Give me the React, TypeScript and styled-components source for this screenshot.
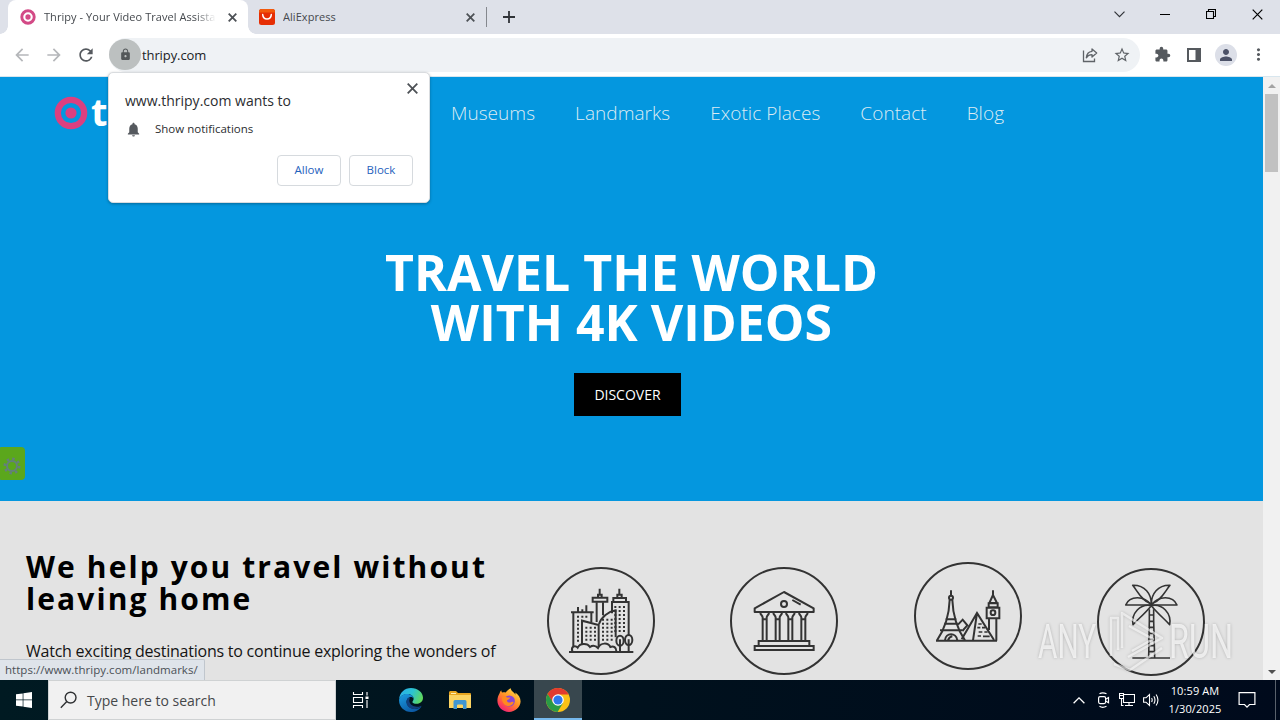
import React, { FC, ReactNode } from 'react';
import styled, { createGlobalStyle, css } from 'styled-components';
import {
  MdArrowBack,
  MdArrowForward,
  MdExtension,
  MdLock,
  MdMoreVert,
  MdNotifications,
  MdPerson,
  MdRefresh,
  MdStarBorder
} from 'react-icons/md';

const GlobalStyle = createGlobalStyle`
  * {
    box-sizing: border-box;
  }

  body {
    margin: 0;
    overflow: hidden;
    font-family: 'Open Sans', 'Noto Sans', sans-serif;
  }

  svg {
    display: block;
    flex: none;
  }
`;

const Desktop = styled.div`
  position: relative;
  display: flex;
  flex-direction: column;
  width: 1280px;
  height: 720px;
  overflow: hidden;
  background: #ffffff;
`;

/* ---------- Browser chrome ---------- */

const TabStrip = styled.div`
  display: flex;
  height: 34px;
  padding-left: 8px;
  background: #dee1e9;
`;

const Tab = styled.div<{ $active?: boolean }>`
  position: relative;
  display: flex;
  align-items: center;
  height: 34px;
  width: ${({ $active }) => ($active ? 240 : 238)}px;
  padding: 0 11px 0 ${({ $active }) => ($active ? 12 : 11)}px;
  font-size: 11px;
  letter-spacing: 0.05px;
  color: #45494e;

  ${({ $active }) =>
    $active &&
    css`
      background: #ffffff;
      border-radius: 8px 8px 0 0;

      &::before,
      &::after {
        content: '';
        position: absolute;
        bottom: 0;
        width: 8px;
        height: 8px;
      }

      &::before {
        left: -8px;
        background: radial-gradient(circle at 0 0, transparent 7.5px, #ffffff 8px);
      }

      &::after {
        right: -8px;
        background: radial-gradient(circle at 100% 0, transparent 7.5px, #ffffff 8px);
      }
    `}
`;

const TabTitle = styled.span<{ $fade?: boolean }>`
  flex: 1;
  margin: 0 12px 0 8px;
  line-height: 16px;
  white-space: nowrap;
  overflow: hidden;
  ${({ $fade }) => $fade && 'mask-image: linear-gradient(90deg, #000 88%, transparent);'}
`;

const TabDivider = styled.div`
  width: 1px;
  height: 20px;
  margin: 7px 16px 0 0;
  background: #85888e;
`;

const NewTab = styled.div`
  display: flex;
  align-items: center;
`;

const WindowButtons = styled.div`
  display: flex;
  height: 28px;
  margin-left: auto;
`;

const WindowButton = styled.div`
  display: flex;
  align-items: center;
  justify-content: center;
  width: 46px;
`;

const Toolbar = styled.div`
  display: flex;
  align-items: center;
  height: 43px;
  padding: 0 0 1px 12px;
  color: #55595e;
  background: #ffffff;
  border-bottom: 1px solid #d8e6ee;
`;

const NavButtons = styled.div`
  display: flex;
  gap: 12px;
  width: 97px;
`;

const DimIcon = styled.span`
  color: #b5b7ba;
`;

const AddressBar = styled.div`
  display: flex;
  align-items: center;
  width: 1031px;
  height: 34px;
  padding-right: 9px;
  font-size: 13px;
  letter-spacing: -0.1px;
  color: #202226;
  background: #eff2f5;
  border-radius: 17px;
`;

const LockBadge = styled.div`
  display: flex;
  align-items: center;
  justify-content: center;
  width: 32px;
  height: 31px;
  margin: 0 1px 0 0;
  padding-left: 1px;
  color: #54585a;
  background: #bcc0c0;
  border-radius: 50%;
`;

const Url = styled.span`
  flex: 1;
`;

const AddressActions = styled.div`
  display: flex;
  align-items: center;
  gap: 15px;
  color: #5f6368;
`;

const ToolbarActions = styled.div`
  display: flex;
  align-items: center;
  margin-left: 6px;
`;

const ToolbarSlot = styled.div`
  display: flex;
  align-items: center;
  justify-content: center;
  width: 32px;
  height: 24px;
`;

const Avatar = styled.div`
  display: flex;
  align-items: center;
  justify-content: center;
  width: 22px;
  height: 22px;
  color: #4c5268;
  background: #dcdfe8;
  border-radius: 50%;
`;

/* ---------- Notification prompt ---------- */

const Prompt = styled.div`
  position: absolute;
  top: 72px;
  left: 108px;
  width: 322px;
  height: 131px;
  padding: 18px 17px 17px;
  background: #ffffff;
  border: 1px solid #d9dcdf;
  border-radius: 5px;
  box-shadow: 0 1px 3px rgba(0, 0, 0, 0.3);
`;

const PromptClose = styled.div`
  position: absolute;
  top: 10px;
  right: 11px;
`;

const PromptTitle = styled.div`
  margin-left: -1px;
  font-size: 14px;
  line-height: 20px;
  color: #2b2d30;
`;

const PromptRow = styled.div`
  display: flex;
  align-items: center;
  gap: 13px;
  margin: 8px 0 0 -1px;
  font-size: 11.5px;
  line-height: 20px;
  color: #2b2d30;
`;

const PromptActions = styled.div`
  display: flex;
  justify-content: flex-end;
  gap: 8px;
  margin: 16px -1px 0 0;
`;

const PromptButton = styled.button`
  width: 64px;
  height: 31px;
  padding: 0 0 2px;
  font: 500 11.5px 'Open Sans', sans-serif;
  color: #1f62bd;
  background: #ffffff;
  border: 1px solid #d6dade;
  border-radius: 4px;
`;

/* ---------- Page ---------- */

const Viewport = styled.div`
  display: flex;
  height: 603px;
`;

const Page = styled.main`
  display: flex;
  flex-direction: column;
  width: 1263px;
  overflow: hidden;
  background: #e3e3e3;
`;

const Hero = styled.section`
  display: flex;
  flex: none;
  flex-direction: column;
  align-items: center;
  height: 424px;
  background: #0497df;
`;

const SiteHeader = styled.header`
  display: flex;
  align-items: center;
  width: 100%;
  height: 72px;
  padding-left: 54px;
`;

const Brand = styled.div`
  display: flex;
  align-items: center;
  gap: 3px;
  width: 397px;
  font-size: 38px;
  font-weight: 700;
  letter-spacing: -2px;
  line-height: 40px;
  color: #ffffff;
`;

const BrandName = styled.span`
  margin-top: -5px;
`;

const SiteNav = styled.nav`
  display: flex;
  gap: 40px;
`;

const SiteLink = styled.a`
  font-size: 19px;
  font-weight: 300;
  line-height: 30px;
  letter-spacing: 0.05px;
  color: #dcebf3;
`;

const HeroTitle = styled.h1`
  margin: 98px 0 26px;
  font-size: 50px;
  font-weight: 700;
  line-height: 50px;
  text-align: center;
  color: #ffffff;
`;

const DiscoverButton = styled.button`
  width: 107px;
  height: 43px;
  margin-right: 8px;
  padding: 0;
  font: 400 14px 'Open Sans', sans-serif;
  color: #ffffff;
  background: #000000;
  border: 0;
`;

const Intro = styled.section`
  display: flex;
  align-items: flex-start;
  padding: 50px 0 0 26px;
`;

const IntroText = styled.div`
  width: 521px;
`;

const IntroTitle = styled.h2`
  margin: 0 0 24px;
  font-size: 30px;
  font-weight: 700;
  line-height: 32px;
  letter-spacing: 2.1px;
  color: #000000;
`;

const IntroBody = styled.p`
  margin: 0;
  font-size: 16px;
  line-height: 24px;
  letter-spacing: -0.23px;
  white-space: nowrap;
  color: #141414;
`;

const Categories = styled.div`
  display: flex;
  gap: 75.300px;
`;

const Category = styled.svg<{ $top: number }>`
  width: 108px;
  height: 108px;
  margin-top: ${({ $top }) => $top}px;
  fill: none;
  stroke: #333333;
  stroke-width: 6;
`;

const Scrollbar = styled.div`
  display: flex;
  flex-direction: column;
  justify-content: space-between;
  width: 17px;
  padding: 7px 2px 6px;
  background: #f1f1f1;
`;

const ScrollTrack = styled.div`
  flex: 1;
  padding-top: 6px;
`;

const ScrollThumb = styled.div`
  height: 78px;
  background: #c1c1c1;
`;

const ScrollArrow = styled.div<{ $down?: boolean }>`
  width: 0;
  margin: 0 auto;
  border: 4px solid transparent;
  ${({ $down }) =>
    $down ? 'border-top-color: #505050; border-bottom: 0;' : 'border-bottom-color: #a3a3a3; border-top: 0;'}
`;

const SettingsHandle = styled.div`
  position: absolute;
  top: 447px;
  left: 0;
  display: flex;
  align-items: center;
  width: 25px;
  height: 33px;
  padding: 5px 0 0 3px;
  background: #5ba71c;
  border-radius: 1px 4px 4px 1px;
`;

const StatusBubble = styled.div`
  position: absolute;
  top: 659px;
  left: 0;
  width: 205px;
  height: 21px;
  padding-left: 5px;
  font-size: 11.5px;
  line-height: 20px;
  letter-spacing: 0.03px;
  color: #4b5056;
  background: #dfe4ea;
  border: solid #c0c6cd;
  border-width: 1px 1px 0 0;
  border-radius: 0 2px 0 0;
`;

const Watermark = styled.svg`
  position: absolute;
  top: 604px;
  left: 1032px;
  overflow: visible;
  filter: drop-shadow(0 0 1.5px rgba(0, 0, 0, 0.3));
`;

/* ---------- Taskbar ---------- */

const Taskbar = styled.div`
  display: flex;
  height: 40px;
  background: linear-gradient(90deg, #001a22, #00111d 50%, #000a1c);
`;

const TaskButton = styled.div<{ $active?: boolean; $gap?: number }>`
  display: flex;
  align-items: center;
  justify-content: center;
  width: 48px;
  height: 40px;
  margin-left: ${({ $gap = 0 }) => $gap}px;
  ${({ $active }) =>
    $active &&
    css`
      background: #38474e;
      box-shadow: inset 0 -2px #76b9ed;
    `}
`;

const SearchBox = styled.div`
  display: flex;
  align-items: center;
  gap: 10px;
  width: 288px;
  padding-left: 11px;
  font-size: 14px;
  color: #45484a;
  background: #f1f1f1;
  border: 1px solid #cfd2d3;
`;

const Tray = styled.div`
  display: flex;
  align-items: center;
  margin-left: auto;
`;

const TraySlot = styled.div<{ $width?: number }>`
  display: flex;
  align-items: center;
  justify-content: center;
  width: ${({ $width = 24 }) => $width}px;
`;

const Clock = styled.div`
  width: 64px;
  font-size: 11px;
  line-height: 18px;
  letter-spacing: 0.1px;
  text-align: center;
  color: #ffffff;
`;

const ShowDesktop = styled.div`
  width: 5px;
  height: 40px;
  margin-left: 8px;
  border-left: 1px solid #59616c;
`;

/* ---------- Icons ---------- */

interface CrossProps {
  size: number;
  color?: string;
  width?: number;
}

const Cross: FC<CrossProps> = ({ size, color = '#4d5156', width = 1.8 }) => (
  <svg width={size} height={size} viewBox={`0 0 ${size} ${size}`} stroke={color} strokeWidth={width}>
    <path d={`M.7 .7L${size - 0.7} ${size - 0.7}M${size - 0.7} .7L.7 ${size - 0.7}`} />
  </svg>
);

const Target: FC<{ size: number; color: string }> = ({ size, color }) => (
  <svg width={size} height={size} viewBox="0 0 34 34">
    <circle cx="17" cy="17" r="13.2" fill="none" stroke={color} strokeWidth="6.2" />
    <circle cx="17" cy="17" r="5.6" fill={color} />
  </svg>
);

const AliIcon = () => (
  <svg width="16" height="16" viewBox="0 0 16 16">
    <rect width="16" height="16" rx="2.5" fill="#e62e04" />
    <path d="M0 3.5V2.5A2.5 2.5 0 0 1 2.5 0h11A2.5 2.5 0 0 1 16 2.5v1z" fill="#f25a0c" />
    <path d="M3.7 5.6c.5 5.8 8.1 5.8 8.6 0" fill="none" stroke="#fff" strokeWidth="1.5" strokeLinecap="round" />
  </svg>
);

const ShareIcon = () => (
  <svg width="16" height="16" viewBox="0 0 16 16" fill="none" stroke="#5f6368" strokeWidth="1.3">
    <path d="M1.5 3.5v11h11v-3" />
    <path d="M10 2l4.7 4L10 10V7.7C7.3 7.7 5.6 8.6 4.3 10.8 4.6 7.3 6.6 4.7 10 4.3z" strokeLinejoin="round" />
  </svg>
);

const SidePanelIcon = () => (
  <svg width="14" height="14" viewBox="0 0 14 14">
    <path d="M0 0h14v14H0zM2 2v10h6.5V2z" fill="#55595e" fillRule="evenodd" />
  </svg>
);

const GearIcon = () => (
  <svg width="18" height="18" viewBox="0 0 18 18" fill="none" stroke="#64807c">
    <circle cx="9" cy="9" r="5" strokeWidth="2" />
    <circle cx="9" cy="9" r="7.2" strokeWidth="2.6" strokeDasharray="2.4 3.255" />
  </svg>
);

// Columns of small square windows, drawn as dashed vertical lines
const Windows: FC<{ xs: number[]; top: number; bottom: number }> = ({ xs, top, bottom }) => (
  <path d={xs.map(x => `M${x} ${top}V${bottom}`).join('')} strokeWidth="6" strokeDasharray="6 6" />
);

interface CategoryIconProps {
  origin: [number, number];
  top: number;
  children: ReactNode;
}

const CategoryIcon: FC<CategoryIconProps> = ({ origin: [x, y], top, children }) => (
  <Category $top={top} viewBox={`${x} ${y} 324 324`}>
    <circle cx={x + 162} cy={y + 162} r="159" />
    {children}
  </Category>
);

const CityIcon = () => (
  <CategoryIcon origin={[51, 51]} top={16}>
    <path d="M117 306H310M130 290V188M123 187H191M184 187V216M144 187V171M157 187V178M169 187V166" />
    <path d="M156 285V212L206 225V290M207 222C214 200 235 185 257 181V262M200 157V216M219 157V196" />
    <path d="M188 143H232V155H188ZM204 143V134H215V143M209 134V116" />
    <path d="M246 190V156H296V255M250 155V144H288V155M262 143V134H275V143M268 134V116" />
    <path d="M270 268V306M296 268V306" />
    <ellipse cx="270" cy="272" rx="11" ry="15" />
    <ellipse cx="296" cy="270" rx="11" ry="15" />
    <path d="M127 304C122 290 135 284 143 293C150 279 172 279 180 291C188 285 198 287 204 294C212 277 234 277 241 291C251 286 259 293 259 304" />
    <Windows xs={[144, 157, 169]} top={197} bottom={209} />
    <Windows xs={[144]} top={209} bottom={281} />
    <Windows xs={[169, 182, 195]} top={230} bottom={274} />
    <Windows xs={[219, 232, 245]} top={206} bottom={274} />
    <Windows xs={[256, 269, 282]} top={168} bottom={248} />
  </CategoryIcon>
);

const MuseumIcon = () => (
  <CategoryIcon origin={[600, 51]} top={16}>
    <path d="M674 186V175L762 126L851 175V186ZM787 150L812 164" strokeLinejoin="round" />
    <circle cx="762" cy="162" r="9" />
    {[704, 743, 781, 820].map(x => (
      <path
        key={x}
        d={`M${x - 13} 189C${x - 12} 195 ${x - 7} 195 ${x - 6} 202V270M${x + 13} 189C${x + 12} 195 ${x + 7} 195 ${x + 6} 202V270M${x - 7} 208H${x + 7}`}
      />
    ))}
    <path d="M686 287V273H838V287M674 288H851V300H674Z" />
  </CategoryIcon>
);

const LandmarksIcon = () => (
  <CategoryIcon origin={[69, 36]} top={11}>
    <path d="M135 272H318M180 121V136M176 150C174 205 158 242 138 271M184 150C186 205 202 242 222 271" />
    <circle cx="180" cy="143" r="6" />
    <path d="M164 208H196M160 221H200M147 241H213M162 271C164 247 196 247 199 271M171 271C174 263 179 260 184 259" />
    <path d="M201 224L215 209L229 226L214 243M212 268L258 189L309 270M258 189L246 271" />
    <path d="M262 222H272M259 233H268M273 233H283M263 246H274M280 246H290M260 258H270M276 259H296" strokeWidth="5" />
    <path d="M306 121V135M306 135L295 159H318ZM293 160H320V172H293ZM287 173H325V205H287ZM294 206V240M316 206V272" />
    <circle cx="306" cy="188" r="7" />
  </CategoryIcon>
);

const PalmIcon = () => (
  <CategoryIcon origin={[620, 54]} top={17}>
    <g strokeWidth="4.8" strokeLinejoin="round">
      <path d="M783 162C783 132 764 105 727 106C741 122 752 151 783 162C783 132 802 105 839 106C825 122 814 151 783 162" />
      <path d="M783 165H706C718 136 762 136 783 165ZM783 165H860C848 136 804 136 783 165Z" />
      <path d="M783 167C750 160 722 190 728 224C745 206 764 190 783 167C816 160 844 190 838 224C821 206 802 190 783 167" />
      <path d="M777 178V212L775 324M790 178V212L793 324M726 324H839" />
      <path d="M777 195H790M777 214H791M776 232H791M776 250H791M775 268H792M775 287H792M775 305H793" />
    </g>
  </CategoryIcon>
);

const WindowsLogo = () => (
  <svg width="16" height="16" viewBox="0 0 16 16" fill="#fff">
    <path d="M0 2.3L6.7 1.4V7.6H0zM7.4 1.3L16 0V7.6H7.4zM0 8.3H6.7V14.6L0 13.7zM7.4 8.3H16V16L7.4 14.7z" />
  </svg>
);

const SearchIcon = () => (
  <svg width="17" height="18" viewBox="0 0 17 18" fill="none" stroke="#2f3133" strokeWidth="1.4">
    <circle cx="10.6" cy="6.6" r="5.4" />
    <path d="M6.8 10.5L.8 16.8" />
  </svg>
);

const TaskViewIcon = () => (
  <svg width="17" height="16" viewBox="0 0 17 16" fill="none" stroke="#fff" strokeWidth="1.1">
    <path d="M1.5 0V2.5H10.5V0M1.5 16V13.5H10.5V16M1.5 5.5H10.5V10.5H1.5ZM15 0V3.5M15 8V16" />
    <path d="M13.5 4.5H16.5V7H13.5Z" fill="#fff" stroke="none" />
  </svg>
);

const EdgeIcon = () => (
  <svg width="24" height="24" viewBox="0 0 24 24">
    <defs>
      <linearGradient id="edgeTop" x1="0" y1="0.3" x2="1" y2="0.6">
        <stop offset="0" stopColor="#2ab0ea" />
        <stop offset="0.5" stopColor="#2bc3d2" />
        <stop offset="1" stopColor="#62d957" />
      </linearGradient>
      <linearGradient id="edgeLow" x1="0" y1="0" x2="0.6" y2="1">
        <stop offset="0" stopColor="#1b9de2" />
        <stop offset="1" stopColor="#0c59a4" />
      </linearGradient>
    </defs>
    <path d="M.1 11.5C.6 4.7 5.6 0 12 0c6.8 0 12 4.5 12 9.7 0 3.5-2.7 6-6.3 6-2.6 0-4.3-.9-4.3-1.8 0-.6 1.2-1.1 1.2-3.1C14.6 7.7 11.7 6 8.2 6 4.3 6 1.2 8.3.1 11.5z" fill="url(#edgeTop)" />
    <path d="M.1 11.5C1 7.7 4.6 5.8 8.3 5.9c3.3.1 6.2 1.9 6.3 4.6-.6-1-1.7-1.6-3-1.5-2.6.2-4.3 2.6-4 5.3.4 3.8 3.8 6.5 8.1 6.5 2.7 0 4.8-.9 6.7-2.4C20.5 21.8 16.6 24 12 24 5.3 24-.5 18.6.1 11.5z" fill="url(#edgeLow)" />
    <path d="M9.2 10c-2.9 2.6-2 7.7 1.5 9.7 3.4 2 8.3 1.4 11.5-1.2.4-.3.1-.9-.5-.6-4.2 1.9-10.2.6-11.3-4.3-.3-1.5.1-2.7.7-3.8z" fill="#123f7d" />
  </svg>
);

const FolderIcon = () => (
  <svg width="22" height="18" viewBox="0 0 22 18">
    <path d="M0 1.500Q0 0 1.3 0H7l2 2H21q1 0 1 1.200V16H0z" fill="#e7a520" />
    <path d="M0 4H22V17H0z" fill="#fcd462" />
    <path d="M4.5 18V10.5Q4.5 9 6 9H16q1.5 0 1.5 1.5V18H14V14.5Q14 13.5 13 13.5H9Q8 13.5 8 14.5V18z" fill="#3f96d3" />
    <path d="M2 2.5H7" stroke="#fff0b8" />
  </svg>
);

const FirefoxIcon = () => (
  <svg width="24" height="24" viewBox="0 0 24 24">
    <defs>
      <linearGradient id="foxBody" x1="0.85" y1="0" x2="0.15" y2="1">
        <stop offset="0" stopColor="#ffe04a" />
        <stop offset="0.45" stopColor="#ff9326" />
        <stop offset="0.75" stopColor="#ff4750" />
        <stop offset="1" stopColor="#e31587" />
      </linearGradient>
    </defs>
    <path d="M2.6 5.2C3 3.7 3.9 2.5 4.3 2.2c0 1 .4 1.9.9 2.3 1.2-.3 2.4-.2 3.5.1C9.8 3 11.6 1.3 13.8.3c.1 1.8 1.1 2.8 2.5 3.9 1.1.8 1.6 1.6 2.1 2.5.2-.7 0-1.6-.1-2.1 3 2 5.3 5.2 5.3 9C23.4 19.3 18.2 24 12 24 5.6 24 .5 19 .4 12.8.4 9.9 1.2 7.3 2.6 5.2z" fill="url(#foxBody)" />
    <circle cx="12.3" cy="13" r="5.6" fill="#8746d8" />
    <path d="M5 9.2c2-1.4 4.2-.6 5.2.4h3c0 1.4-2.7 1.8-3.3 2.9.3 2 2.4 2.7 4.5 1.6 1.3-.6 2.5-.2 2.2.5-1 2.5-3.5 4-6.2 3.3C6.5 17 4.6 13 5 9.2z" fill="#ff8a1f" />
  </svg>
);

const ChromeIcon = () => (
  <svg width="24" height="24" viewBox="0 0 24 24">
    <circle cx="12" cy="12" r="12" fill="#fbc116" />
    <path d="M12 6.5H22.6A12 12 0 0 0 1.6 6L7 15z" fill="#e33b2e" />
    <path d="M1.6 6A12 12 0 0 0 11.6 24L17 15 12 12 7.2 14.7z" fill="#2a9a46" />
    <circle cx="12" cy="12" r="5.8" fill="#fff" />
    <circle cx="12" cy="12" r="4.6" fill="#2f78ec" />
  </svg>
);

const RecorderIcon = () => (
  <svg width="14" height="16" viewBox="0 0 14 16" fill="none" stroke="#fff" strokeWidth="1.2">
    <rect x="2.6" y="4.6" width="7" height="7" rx="1.5" />
    <path d="M9.6 7.2L12.500 5.5V10.7L9.6 9M3.5 1.8Q6.5 -.2 10.5 1.8M3.5 14.3Q6.5 16.3 10.5 14.3" />
  </svg>
);

const NetworkIcon = () => (
  <svg width="16" height="14" viewBox="0 0 16 14" fill="none" stroke="#fff" strokeWidth="1.1">
    <path d="M5 1.5H15.5V9.5H4.5V6M10 9.5V12.5M6 12.5H14M.5 .5H4.5V5.5H.5ZM2.5 5.5V12.5H4.5M.5 2.5H4.5" />
  </svg>
);

const VolumeIcon = () => (
  <svg width="17" height="14" viewBox="0 0 17 14" fill="none" stroke="#fff" strokeWidth="1.1">
    <path d="M.6 4.8H3L6.5 1.5V12.5L3 9.2H.6ZM8.6 5Q9.8 7 8.6 9M10.8 3.3Q13.2 7 10.8 10.7M13.1 1.5Q16.8 7 13.1 12.5" />
  </svg>
);

const ActionCenterIcon = () => (
  <svg width="18" height="18" viewBox="0 0 18 18" fill="none" stroke="#fff" strokeWidth="1.2">
    <path d="M1.1 1.6H16.9V13.5H11.5L9 16.2 6.5 13.5H1.1Z" />
  </svg>
);

const links = ['Museums', 'Landmarks', 'Exotic Places', 'Contact', 'Blog'];

const BrowserTabs = () => (
  <TabStrip>
    <Tab $active>
      <Target size={16} color="#d34a86" />
      <TabTitle $fade>Thripy - Your Video Travel Assistant</TabTitle>
      <Cross size={9} />
    </Tab>
    <Tab>
      <AliIcon />
      <TabTitle>AliExpress</TabTitle>
      <Cross size={9} />
    </Tab>
    <TabDivider />
    <NewTab>
      <svg width="12" height="12" viewBox="0 0 12 12" stroke="#303338" strokeWidth="1.8">
        <path d="M6 0V12M0 6H12" />
      </svg>
    </NewTab>
    <WindowButtons>
      <WindowButton>
        <svg width="11" height="7" viewBox="0 0 11 7" fill="none" stroke="#303338" strokeWidth="1.2">
          <path d="M.5 .7L5.5 5.7 10.5 .7" />
        </svg>
      </WindowButton>
      <WindowButton>
        <svg width="10" height="1" viewBox="0 0 10 1">
          <rect width="10" height="1" />
        </svg>
      </WindowButton>
      <WindowButton>
        <svg width="10" height="10" viewBox="0 0 10 10" fill="none" stroke="#000" strokeWidth="1.1">
          <path d="M.5 2.5H7.5V9.5H.5ZM2.5 2.5V.5H9.5V7.5H7.5" />
        </svg>
      </WindowButton>
      <WindowButton>
        <Cross size={11} color="#000" width={1.2} />
      </WindowButton>
    </WindowButtons>
  </TabStrip>
);

const BrowserToolbar = () => (
  <Toolbar>
    <NavButtons>
      <DimIcon>
        <MdArrowBack size={20} />
      </DimIcon>
      <DimIcon>
        <MdArrowForward size={20} />
      </DimIcon>
      <MdRefresh size={20} />
    </NavButtons>
    <AddressBar>
      <LockBadge>
        <MdLock size={13} />
      </LockBadge>
      <Url>thripy.com</Url>
      <AddressActions>
        <ShareIcon />
        <MdStarBorder size={18} />
      </AddressActions>
    </AddressBar>
    <ToolbarActions>
      <ToolbarSlot>
        <MdExtension size={17} />
      </ToolbarSlot>
      <ToolbarSlot>
        <SidePanelIcon />
      </ToolbarSlot>
      <ToolbarSlot>
        <Avatar>
          <MdPerson size={18} />
        </Avatar>
      </ToolbarSlot>
      <ToolbarSlot>
        <MdMoreVert size={19} />
      </ToolbarSlot>
    </ToolbarActions>
  </Toolbar>
);

const NotificationPrompt = () => (
  <Prompt>
    <PromptClose>
      <Cross size={11} />
    </PromptClose>
    <PromptTitle>www.thripy.com wants to</PromptTitle>
    <PromptRow>
      <MdNotifications size={17} color="#55595e" />
      Show notifications
    </PromptRow>
    <PromptActions>
      <PromptButton>Allow</PromptButton>
      <PromptButton>Block</PromptButton>
    </PromptActions>
  </Prompt>
);

const AnyRunWatermark = () => (
  <Watermark width="206" height="72" viewBox="0 0 206 72">
    <g fill="#fff" fillOpacity="0.7" fontFamily="Roboto" fontWeight="400" fontSize="48">
      <text x="6" y="54" textLength="58" lengthAdjust="spacingAndGlyphs">
        ANY
      </text>
      <text x="137" y="54" textLength="64" lengthAdjust="spacingAndGlyphs">
        RUN
      </text>
    </g>
    <g fill="none" stroke="#fff" strokeOpacity="0.6" strokeWidth="2.5" strokeLinejoin="round">
      <path d="M79 52V14H86V46" />
      <path d="M90 44V9L130 34 96 53" />
      <path d="M97 22L121 35 100 47" />
      <path d="M82 60L98 66 130 44" />
    </g>
  </Watermark>
);

const WindowsTaskbar = () => (
  <Taskbar>
    <TaskButton>
      <WindowsLogo />
    </TaskButton>
    <SearchBox>
      <SearchIcon />
      Type here to search
    </SearchBox>
    <TaskButton>
      <TaskViewIcon />
    </TaskButton>
    <TaskButton $gap={3}>
      <EdgeIcon />
    </TaskButton>
    <TaskButton $gap={1}>
      <FolderIcon />
    </TaskButton>
    <TaskButton $gap={1}>
      <FirefoxIcon />
    </TaskButton>
    <TaskButton $gap={1} $active>
      <ChromeIcon />
    </TaskButton>
    <Tray>
      <TraySlot>
        <svg width="12" height="7" viewBox="0 0 12 7" fill="none" stroke="#fff" strokeWidth="1.3">
          <path d="M.6 6.3L6 .9 11.4 6.3" />
        </svg>
      </TraySlot>
      <TraySlot>
        <RecorderIcon />
      </TraySlot>
      <TraySlot>
        <NetworkIcon />
      </TraySlot>
      <TraySlot>
        <VolumeIcon />
      </TraySlot>
      <Clock>
        10:59 AM
        <br />
        1/30/2025
      </Clock>
      <TraySlot $width={40}>
        <ActionCenterIcon />
      </TraySlot>
      <ShowDesktop />
    </Tray>
  </Taskbar>
);

const App: FC = () => (
  <Desktop>
    <GlobalStyle />
    <BrowserTabs />
    <BrowserToolbar />
    <Viewport>
      <Page>
        <Hero>
          <SiteHeader>
            <Brand>
              <Target size={34} color="#dc3f80" />
              <BrandName>thripy</BrandName>
            </Brand>
            <SiteNav>
              {links.map(label => (
                <SiteLink key={label}>{label}</SiteLink>
              ))}
            </SiteNav>
          </SiteHeader>
          <HeroTitle>
            TRAVEL THE WORLD
            <br />
            WITH 4K VIDEOS
          </HeroTitle>
          <DiscoverButton>DISCOVER</DiscoverButton>
        </Hero>
        <Intro>
          <IntroText>
            <IntroTitle>
              We help you travel without
              <br />
              leaving home
            </IntroTitle>
            <IntroBody>Watch exciting destinations to continue exploring the wonders of</IntroBody>
          </IntroText>
          <Categories>
            <CityIcon />
            <MuseumIcon />
            <LandmarksIcon />
            <PalmIcon />
          </Categories>
        </Intro>
      </Page>
      <Scrollbar>
        <ScrollArrow />
        <ScrollTrack>
          <ScrollThumb />
        </ScrollTrack>
        <ScrollArrow $down />
      </Scrollbar>
    </Viewport>
    <SettingsHandle>
      <GearIcon />
    </SettingsHandle>
    <StatusBubble>https://www.thripy.com/landmarks/</StatusBubble>
    <NotificationPrompt />
    <AnyRunWatermark />
    <WindowsTaskbar />
  </Desktop>
);

export default App;
